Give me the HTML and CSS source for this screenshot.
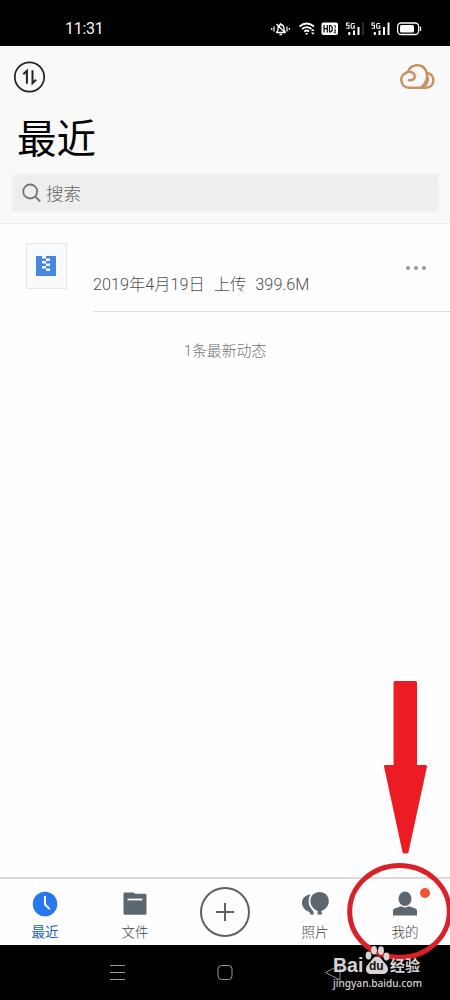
FILE: index.html
```html
<!DOCTYPE html>
<html lang="zh-CN">
<head>
<meta charset="utf-8">
<title>最近</title>
<link rel="stylesheet" href="styles.css">
</head>
<body>
<div class="phone">
  <div class="status">
    <span class="clock">11:31</span>
    <svg class="status-icons" width="154" height="18" viewBox="270 20 154 18" fill="none" stroke="#fff">
      <!-- muted bell -->
      <path d="M276 32.5h9.500M276.500 32.500l1.500-2.500v-2q.5-3 3-3.500q2.500.5 3 3.500v2l1.500 2.500M280.500 23v1M279.500 34.500h2.500M276.500 24l9 9" stroke-width="1.300"/>
      <path d="M274 26.500v5M271.700 28v2M287 26.500v5M289.300 28v2" stroke-width="1.200"/>
      <!-- wifi -->
      <path d="M299.500 26.500q7-6 14.500 0M302 29q4.800-3.800 9.500 0M304.300 31.500q2.500-2 4.800 0" stroke-width="1.700"/>
      <path d="M305 33h3.200l-1.600 2zM311 31l1.800-2.200 1.800 2.200zM311 32.500l1.800 2.200 1.800-2.200z" fill="#fff" stroke="none"/>
      <!-- HD badge -->
      <rect x="321.500" y="22.500" width="16.500" height="12.500" rx="2" fill="#fff" stroke="none"/>
      <path d="M324 25v7.500M327.300 25v7.500M324 28.700h3.300M329.500 25.500v6.500h.8q2-.3 2-3.200t-2-3.300z" stroke="#000" stroke-width="1.200"/>
      <path d="M334.200 25.500h1v3M334 30h1.800l-1.500 2.800h1.800" stroke="#000" stroke-width=".9"/>
      <!-- signal bars -->
      <g id="sig">
        <path d="M349.500 23h-3v2.300h2.500v3h-2.800M354.500 23.500h-2.500q-.8 0-.8 1v3q0 .8.800.8h2.300v-2.300h-1.300" stroke-width="1.100"/>
        <path d="M349.300 32v3M354 30.500v4.500M358.500 27v8" stroke-width="2"/>
      </g>
      <path d="M363 22.500v12.500" stroke="#2b2b2b" stroke-width="2"/>
      <use href="#sig" x="25.500"/>
      <path d="M388.500 22.500v12.500" stroke-width="2"/>
      <!-- battery -->
      <rect x="397.600" y="23" width="21" height="11.500" rx="3.500" stroke-width="1.300"/>
      <rect x="400" y="25" width="14" height="7.500" rx="1.500" fill="#fff" stroke="none"/>
      <path d="M420.500 26.500v4.500" stroke-width="1.300"/>
    </svg>
  </div>

  <header class="header">
    <div class="actions">
      <svg width="32" height="32" viewBox="0 0 32 32" fill="none" stroke="#222">
        <circle cx="16.500" cy="16" r="14.700" stroke-width="1.700"/>
        <path d="M10.300 13.200l3.600-3.400v13M19.500 9.300v12.900l3.600-3.400" stroke-width="2"/>
      </svg>
      <svg class="cloud" width="36" height="28" viewBox="0 0 36 28" fill="none" stroke="#c39462" stroke-width="2.500" stroke-linecap="round">
        <path d="M10 17.200c4 .5 6.300-1.600 5.700-4.600C15 9.300 11 8 7.700 9.500C3.500 11 1.500 14.500 2.500 18.500q1.500 6.200 8 6.200H27C36.500 24.700 36.500 11.500 28.700 10.200"/>
        <path d="M9 8.800C11.500.5 23.500-.2 27 7.800c2.500 5.500.4 12-4.500 16.700"/>
        <path d="M29 14.500q1 6-4.500 9.500" stroke-width="2"/>
      </svg>
    </div>
    <h1 class="title">最近</h1>
    <div class="search">
      <svg width="20" height="20" viewBox="0 0 20 20" fill="none" stroke="#77777a" stroke-width="1.800">
        <circle cx="8.200" cy="8.500" r="7"/><path d="M13.200 13.500l5 5"/>
      </svg>
      <span>搜索</span>
    </div>
  </header>

  <main class="content">
    <div class="file">
      <div class="thumb">
        <svg width="20" height="20" viewBox="0 0 20 20">
          <path d="M0 0h20v20H0z" fill="#4688e0"/>
          <path d="M6 0h4v2.500H6zM10 2.500h4V5h-4zM6 5h4v2.500H6zM10 7.500h4V10h-4zM6 10h4v2.500H6zM10 12.500h4V15h-4z" fill="#fff"/>
        </svg>
      </div>
      <div class="info">
        <div class="meta"><span>2019年4月19日</span><span>上传</span><span>399.6M</span></div>
        <div class="more"><i></i><i></i><i></i></div>
      </div>
    </div>
    <p class="summary">1条最新动态</p>
  </main>

  <nav class="tabs">
    <div class="tab active">
      <svg width="26" height="26" viewBox="0 0 26 26"><circle cx="13" cy="13" r="12.300" fill="#2878ed"/><path d="M13 5v8.500l4.800 4.600" fill="none" stroke="#fff" stroke-width="1.900"/></svg>
      <span>最近</span>
    </div>
    <div class="tab">
      <svg width="26" height="26" viewBox="0 0 26 26"><path d="M2.500 1.500H11q1.300 0 1.800 1.200H23q1.500 0 1.500 1.500v18q0 1.500-1.500 1.500H3q-1.500 0-1.500-1.500V2.700q0-1.200 1-1.200z" fill="#5d676f"/><path d="M5.500 8.500h15" stroke="#fff" stroke-width="1.800"/></svg>
      <span>文件</span>
    </div>
    <div class="tab add">
      <svg width="52" height="52" viewBox="0 0 52 52" fill="none" stroke="#5e6063" stroke-width="2"><circle cx="26" cy="26" r="24"/><path d="M17 26h18M26 17v18"/></svg>
    </div>
    <div class="tab">
      <svg width="28" height="26" viewBox="0 0 28 26" fill="#5d676f">
        <path d="M9.500 3.500C4 4 1 7.500 1 12c0 4 3 7.200 6.500 8.500Q9.500 21.500 9.500 23.500h3.200q.3-2.700-1-4Q7.600 15 7.600 10.500 7.500 6.500 9.500 3.500z"/>
        <path d="M18.600 1C13.300 1 9.400 4.900 9.400 10c0 5 3.500 8.300 7.600 10.200L16.200 23.500h5L20.200 20.200c4.200-1.900 7.600-5.200 7.600-10.200C27.800 4.900 23.900 1 18.600 1z"/>
      </svg>
      <span>照片</span>
    </div>
    <div class="tab">
      <svg width="26" height="26" viewBox="0 0 26 26" fill="#5d676f"><ellipse cx="13" cy="7.800" rx="6.500" ry="7.200"/><path d="M1 24.500V20Q1 17.500 4 16.900l5-1.600q4 2.300 8 0l5 1.600q3 .6 3 3.100v4.500z"/></svg>
      <span>我的</span>
      <i class="dot"></i>
    </div>
  </nav>

  <div class="system">
    <svg width="450" height="55" viewBox="0 945 450 55" fill="none" stroke="#999" stroke-width="1">
      <path d="M110 965.500h15M110 972.500h15M110 979.500h15"/>
      <rect x="218" y="965.500" width="14" height="14" rx="3.500"/>
      <path d="M340 965l-14.500 7.500 14.500 7.500z"/>
    </svg>
  </div>

  <svg class="pointer" width="450" height="1000" viewBox="0 0 450 1000">
    <path d="M395 682.500h20.500v84h10L407 852h-3L385.500 766.500H395z" fill="#ec1c24" stroke="#ec1c24" stroke-width="3" stroke-linejoin="round"/>
    <ellipse cx="399.500" cy="911.500" rx="49.800" ry="46" fill="none" stroke="#da2128" stroke-width="5"/>
  </svg>

  <div class="watermark">
    <div class="brand">
      <span class="latin">Bai</span>
      <span class="paw">
        <svg width="26" height="29" viewBox="0 0 26 29" fill="#d9d4d4"><ellipse cx="4.500" cy="9.500" rx="2.900" ry="4"/><ellipse cx="10" cy="4.300" rx="2.900" ry="4.200"/><ellipse cx="17" cy="4.500" rx="2.900" ry="4.200"/><ellipse cx="22.500" cy="10.500" rx="2.900" ry="4"/><path d="M13 10.500c3 0 4 2 6 4.500s5 4.500 5 8-2.500 5-5 5H7c-3 0-5-1.500-5-5s3-5.500 5-8 3-4.500 6-4.500z"/></svg>
        <b>du</b>
      </span>
      <span class="han">经验</span>
    </div>
    <div class="site">jingyan.baidu.com</div>
  </div>
</div>
</body>
</html>
```
FILE: styles.css
```css
* { box-sizing: border-box; }
body { margin: 0; }
svg { display: block; flex: none; }
.phone {
  position: relative;
  display: flex;
  flex-direction: column;
  width: 450px;
  height: 1000px;
  overflow: hidden;
  background: #fefefe;
  font-family: Roboto, "Noto Sans CJK SC", sans-serif;
  font-weight: 300;
}
.status {
  height: 46px;
  padding: 20px 26px 0 65px;
  display: flex;
  justify-content: space-between;
  background: #000;
  color: #f4f4f4;
}
.clock { font-size: 16px; line-height: 18px; font-weight: 400; letter-spacing: -.3px; }
.header {
  height: 178px;
  padding: 15px 12px 0 13px;
  background: #f9f9fa;
  border-bottom: 1px solid #ebebed;
}
.actions { display: flex; justify-content: space-between; height: 32px; }
.cloud { margin: 2px 3px 0 0; }
.title {
  margin: 18px 0 0 4px;
  height: 56px;
  font-size: 39.500px;
  line-height: 57px;
  font-weight: 400;
  color: #000;
}
.search {
  margin-top: 8px;
  height: 36px;
  padding-left: 9px;
  display: flex;
  align-items: center;
  gap: 4px;
  background: #eee;
  box-shadow: 0 0 3px #e9e9e9;
  border-radius: 2px;
  font-size: 17.500px;
  line-height: 36px;
  color: #666;
}
.search span { padding-top: 2px; }
.content { flex: 1; }
.file { display: flex; height: 88px; padding-left: 26px; }
.thumb {
  width: 41px;
  height: 46px;
  margin: 19px 26px 0 0;
  padding-right: 1px;
  display: flex;
  align-items: center;
  justify-content: center;
  background: #f9fafb;
  border: 1px solid #e5e7e9;
}
.info {
  flex: 1;
  display: flex;
  justify-content: space-between;
  border-bottom: 1px solid #dedede;
}
.meta {
  display: flex;
  gap: 9px;
  padding-top: 49px;
  font-size: 16.250px;
  line-height: 24px;
  color: #505050;
  white-space: nowrap;
}
.more { display: flex; gap: 4px; padding: 42px 24px 0 0; }
.more i { width: 4px; height: 4px; border-radius: 50%; background: #999; }
.summary {
  margin: 27px 0 0;
  text-align: center;
  font-size: 14.900px;
  line-height: 24px;
  color: #737373;
}
.tabs {
  height: 68px;
  display: grid;
  grid-template-columns: repeat(5, 1fr);
  border-top: 2px solid #dadada;
}
.tab {
  position: relative;
  display: flex;
  flex-direction: column;
  align-items: center;
  padding-top: 12px;
  font-size: 13.500px;
  line-height: 20px;
  color: #444;
}
.tab span { margin-top: 5px; }
.tab.active { color: #1265b8; font-weight: 400; }
.tab.add { padding-top: 7px; }
.dot {
  position: absolute;
  top: 9px;
  right: 20px;
  width: 10px;
  height: 10px;
  border-radius: 50%;
  background: #f5532d;
}
.system { height: 55px; background: #000; }
.pointer { position: absolute; left: 0; top: 0; }
.watermark {
  position: absolute;
  left: 333px;
  top: 946px;
  color: #d6d4d4;
}
.brand { display: flex; height: 30px; }
.latin { width: 31px; padding-top: 9px; font: 700 19.500px/20px "Liberation Sans", sans-serif; }
.paw { position: relative; width: 26px; }
.paw b {
  position: absolute;
  left: 5px;
  top: 13px;
  font: 700 12px/14px "Liberation Sans", sans-serif;
  color: #111;
}
.han { padding-top: 9px; font: 700 15px/20px "Noto Sans CJK SC", sans-serif; white-space: nowrap; }
.site { margin-top: 1px; font: 500 10.100px/13px "Noto Sans", sans-serif; white-space: nowrap; }
```
